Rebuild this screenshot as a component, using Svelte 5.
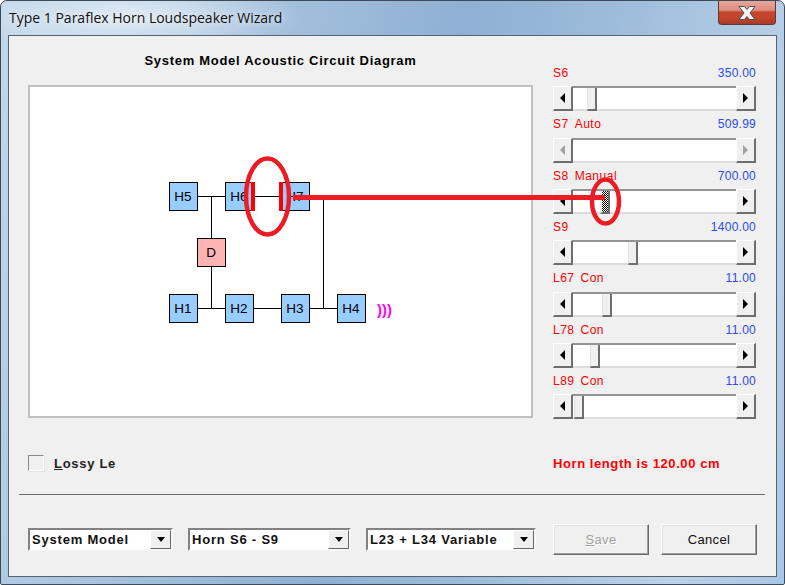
<script>
  // thumb = left edge of the thumb, in px from the start of the track
  const sliders = [
    { name: "S6", mode: "", value: "350.00", thumb: 14 },
    { name: "S7", mode: "Auto", value: "509.99", disabled: true },
    { name: "S8", mode: "Manual", value: "700.00", thumb: 27, active: true },
    { name: "S9", mode: "", value: "1400.00", thumb: 55 },
    { name: "L67", mode: "Con", value: "11.00", thumb: 29 },
    { name: "L78", mode: "Con", value: "11.00", thumb: 17 },
    { name: "L89", mode: "Con", value: "11.00", thumb: 1 }
  ];

  const boxes = [
    { id: "H5", x: 139, y: 95 },
    { id: "H6", x: 195, y: 95 },
    { id: "H7", x: 251, y: 95 },
    { id: "D", x: 167, y: 151, pink: true },
    { id: "H1", x: 139, y: 207 },
    { id: "H2", x: 195, y: 207 },
    { id: "H3", x: 251, y: 207 },
    { id: "H4", x: 307, y: 207 }
  ];

  const wires = [
    "M168 109.5H195", "M224 109.5H251", "M181.5 109.5V151", "M181.5 180V221.5",
    "M168 221.5H195", "M224 221.5H251", "M280 221.5H307",
    "M280 109.5H293.5V221.5"
  ];

  const combos = [
    { text: "System Model", width: 145 },
    { text: "Horn S6 - S9", width: 163 },
    { text: "L23 + L34 Variable", width: 170 }
  ];
</script>

<div class="window">
  <div class="titlebar">
    <span class="title">Type 1 Paraflex Horn Loudspeaker Wizard</span>
    <div class="close">
      <svg width="26" height="16" viewBox="0 0 26 16">
        <path d="M5 1.5h5.5l2.5 3 2.5-3H21l-5 6.5 5 6.5h-5.5l-2.5-3-2.5 3H5l5-6.5z" fill="#f1f1f1" stroke="#4e4e55" stroke-width="1" />
      </svg>
    </div>
  </div>

  <div class="client">
    <div class="main">
      <div class="left">
        <h2>System Model Acoustic Circuit Diagram</h2>
        <div class="diagram">
          <svg width="501" height="328" viewBox="0 0 501 328">
            {#each wires as d}
              <path {d} fill="none" stroke="#000" shape-rendering="crispEdges" />
            {/each}
            {#each boxes as b}
              <rect x={b.x + 0.5} y={b.y + 0.5} width="28" height="28" fill={b.pink ? "#ffb3b3" : "#99ccff"} stroke="#000" shape-rendering="crispEdges" />
              <text x={b.x + 14} y={b.y + 19} text-anchor="middle" class="box-label">{b.id}</text>
            {/each}
            <text x="347" y="228" class="waves">)))</text>
          </svg>
        </div>
      </div>

      <div class="sliders">
        {#each sliders as s}
          <div class="slider">
            <div class="slider-label">
              <span class="name">{s.name}<span class="mode">{s.mode}</span></span>
              <span class="value">{s.value}</span>
            </div>
            <div class="scrollbar" class:disabled={s.disabled}>
              <div class="arrow-btn"><i class="tri-left"></i></div>
              <div class="track">
                {#if !s.disabled}
                  <div class="thumb" class:active={s.active} style="margin-left: {s.thumb}px"></div>
                {/if}
              </div>
              <div class="arrow-btn"><i class="tri-right"></i></div>
            </div>
          </div>
        {/each}
      </div>
    </div>

    <div class="status">
      <label class="check">
        <span class="box"></span>
        <span><u>L</u>ossy Le</span>
      </label>
      <span class="horn">Horn length is 120.00 cm</span>
    </div>

    <div class="rule"></div>

    <div class="actions">
      {#each combos as c}
        <div class="combo" style="width: {c.width}px">
          <span class="combo-text">{c.text}</span>
          <div class="combo-btn"><i class="tri-down"></i></div>
        </div>
      {/each}
      <button class="save" disabled><u>S</u>ave</button>
      <button class="cancel">Cancel</button>
    </div>
  </div>

  <!-- annotations drawn over the dialog -->
  <svg class="markup" width="785" height="585" viewBox="0 0 785 585">
    <rect x="251" y="182" width="4" height="29" fill="#ff0000" />
    <rect x="279" y="182" width="4" height="29" fill="#ff0000" />
    <rect x="293" y="195" width="312" height="5" fill="#ed1c24" />
    <ellipse cx="267.5" cy="196.5" rx="21.5" ry="38" fill="none" stroke="#ed1c24" stroke-width="4.5" />
    <ellipse cx="605.5" cy="201.5" rx="13.5" ry="22" fill="none" stroke="#ed1c24" stroke-width="4.5" />
  </svg>
</div>

<style>
  :global(body) {
    margin: 0;
    background: #fff;
  }

  .window {
    position: relative;
    box-sizing: border-box;
    width: 785px;
    height: 585px;
    display: flex;
    flex-direction: column;
    overflow: hidden;
    border-radius: 7px 7px 2px 2px;
    border: 1px solid #3e4a57;
    background:
      radial-gradient(ellipse 170px 38px at 130px 16px, rgba(255, 255, 255, 0.62), rgba(255, 255, 255, 0) 100%),
      linear-gradient(105deg, #c2d7eb 0, #a9c4df 25%, #8fb0d4 50%, #9dbcdb 66%, #bcd2e8 88%, #a9c6e4 100%);
    font-family: "Liberation Sans", Arial, sans-serif;
  }

  .titlebar {
    height: 34px;
    flex: none;
    display: flex;
    justify-content: space-between;
    align-items: flex-start;
  }

  .title {
    margin: 5px 0 0 8px;
    font-family: "Open Sans", sans-serif;
    font-size: 14px;
    line-height: 24px;
    color: #101010;
    text-shadow: 0 0 6px rgba(255, 255, 255, 0.8);
  }

  .close {
    width: 58px;
    height: 24px;
    margin-right: 8px;
    box-sizing: border-box;
    border: 1px solid #5a3a38;
    border-top: 0;
    border-radius: 0 0 4px 4px;
    background: linear-gradient(#e8a69c 0, #dc8c7f 40%, #c5452c 48%, #c5452c 70%, #a93a28 100%);
    display: flex;
    align-items: center;
    justify-content: center;
  }

  .client {
    flex: 1;
    margin: 0 7px 7px 7px;
    border: 1px solid #56646f;
    background: #f0f0f0;
    box-sizing: border-box;
  }

  .main {
    display: flex;
    gap: 20px;
    padding: 16px 0 0 19px;
  }

  .left {
    width: 505px;
  }

  h2 {
    margin: 0;
    height: 33px;
    font-size: 13px;
    line-height: 18px;
    font-weight: bold;
    text-align: center;
    letter-spacing: 0.71px;
    color: #000;
  }

  .diagram {
    box-sizing: border-box;
    width: 505px;
    height: 333px;
    border: 2px solid #c0c0c0;
    background: #fff;
  }

  .diagram svg {
    display: block;
  }

  .box-label {
    font-size: 13.5px;
    fill: #000;
  }

  .waves {
    font-size: 15px;
    font-weight: bold;
    fill: #ff00ff;
  }

  .sliders {
    width: 203px;
    margin-top: 8px;
  }

  .slider {
    height: 51.33px;
  }

  .slider-label {
    height: 26.33px;
    display: flex;
    justify-content: space-between;
    align-items: center;
    font-size: 12px;
    letter-spacing: 0.25px;
  }

  .name {
    color: #ff0000;
    letter-spacing: 0.5px;
  }

  .mode {
    margin-left: 6px;
  }

  .value {
    color: #2a4bf0;
  }

  .scrollbar {
    height: 25px;
    display: flex;
  }

  .arrow-btn {
    box-sizing: border-box;
    width: 20px;
    height: 25px;
    flex: none;
    display: flex;
    align-items: center;
    justify-content: center;
    background: #f0f0f0;
    border-style: solid;
    border-width: 1px 2px 2px 1px;
    border-color: #fff #6e6e6e #6e6e6e #fff;
  }

  .track {
    flex: 1;
    box-sizing: border-box;
    background: #fff;
    display: flex;
    border-top: 2px solid #949494;
    border-bottom: 2px solid #dcdcdc;
    height: 25px;
  }

  .thumb {
    box-sizing: border-box;
    width: 10px;
    height: 23px;
    background: #f0f0f0;
    border-style: solid;
    border-width: 0 2px 2px 1px;
    border-color: #e3e3e3 #6e6e6e #6e6e6e #e3e3e3;
  }

  .thumb.active {
    border-width: 0 2px 2px 2px;
    background: repeating-conic-gradient(#000 0 25%, #fff 0 50%) 0 0 / 2px 2px;
  }

  .tri-left,
  .tri-right {
    width: 0;
    height: 0;
    border-top: 5px solid transparent;
    border-bottom: 5px solid transparent;
  }

  .tri-left {
    border-right: 5px solid #000;
  }

  .tri-right {
    border-left: 5px solid #000;
  }

  .disabled .tri-left {
    border-right-color: #a0a0a0;
  }

  .disabled .tri-right {
    border-left-color: #a0a0a0;
  }

  .tri-down {
    width: 0;
    height: 0;
    border-left: 4.5px solid transparent;
    border-right: 4.5px solid transparent;
    border-top: 5px solid #000;
  }

  .status {
    margin-top: 34px;
    height: 20px;
    padding-left: 19px;
    display: flex;
    align-items: center;
    gap: 0;
  }

  .check {
    width: 525px;
    display: flex;
    align-items: center;
    gap: 10px;
    font-size: 13px;
    font-weight: bold;
    letter-spacing: 0.7px;
    color: #222;
  }

  .box {
    box-sizing: border-box;
    width: 16px;
    height: 16px;
    border: 1px solid;
    border-color: #8a8a8a #fff #fff #8a8a8a;
    box-shadow: 1px 1px 0 #e3e3e3;
  }

  .horn {
    font-size: 13px;
    font-weight: bold;
    letter-spacing: 0.58px;
    color: #ff0000;
  }

  .rule {
    height: 1px;
    margin: 21px 11px 0 10px;
    background: #6d6d6d;
  }

  .actions {
    margin-top: 29px;
    padding-left: 19px;
    height: 31px;
    display: flex;
    align-items: center;
    gap: 15px;
  }

  .combo {
    box-sizing: border-box;
    height: 23px;
    display: flex;
    justify-content: space-between;
    background: #fff;
    border: 2px solid;
    border-color: #828282 #f7f7f7 #f7f7f7 #828282;
    outline: 0;
  }

  .combo-text {
    padding-left: 2px;
    font-size: 13px;
    line-height: 19px;
    font-weight: bold;
    letter-spacing: 0.8px;
    color: #111;
  }

  .combo-btn {
    box-sizing: border-box;
    width: 21px;
    height: 19px;
    display: flex;
    align-items: center;
    justify-content: center;
    background: #f0f0f0;
    border: 1px solid;
    border-color: #fff #696969 #696969 #fff;
  }

  button {
    box-sizing: border-box;
    width: 96px;
    height: 31px;
    padding: 0;
    background: #f0f0f0;
    border: 1px solid;
    border-color: #fff #696969 #696969 #fff;
    box-shadow: inset -1px -1px 0 #a0a0a0, inset 1px 1px 0 #e3e3e3;
    font-family: inherit;
    font-size: 13px;
    letter-spacing: 0.3px;
    color: #111;
  }

  .save {
    margin-left: 2px;
    color: #a0a0a0;
    text-shadow: 1px 1px 0 #fff;
  }

  .cancel {
    margin-left: -3px;
  }

  .markup {
    position: absolute;
    left: -1px;
    top: -1px;
    pointer-events: none;
  }
</style>
